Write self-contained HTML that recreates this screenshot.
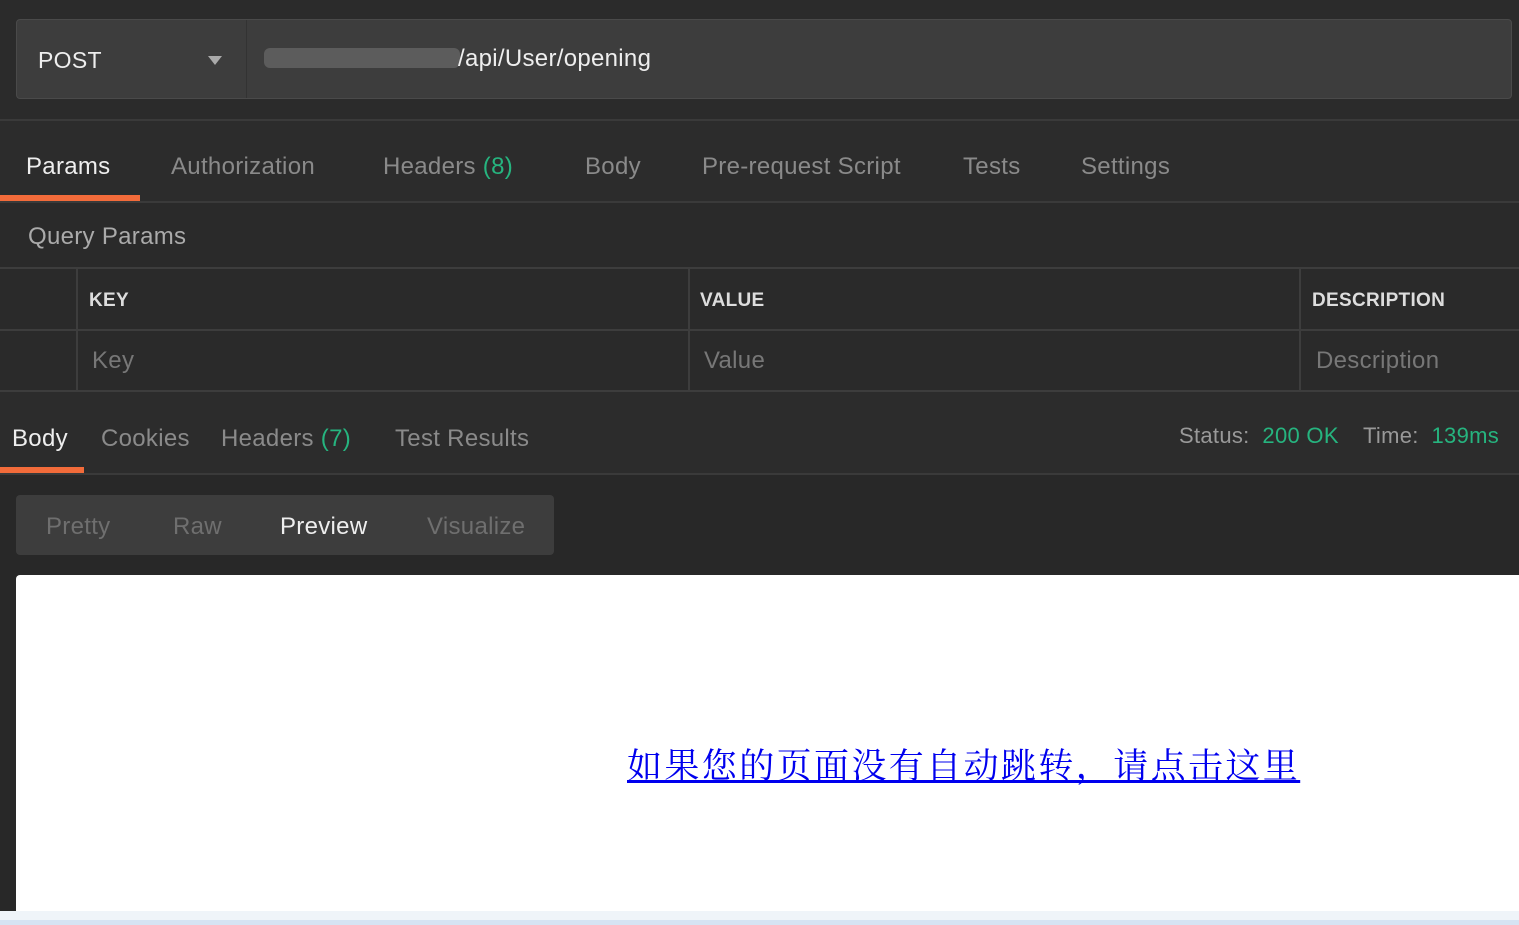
<!DOCTYPE html>
<html><head><meta charset="utf-8"><style>
*{margin:0;padding:0;box-sizing:border-box}
body{width:1519px;height:925px;background:#282828;font-family:"Liberation Sans","Noto Sans CJK SC",sans-serif;position:relative;overflow:hidden;color:#8a8a8a}
.a{position:absolute}
.t{position:absolute;font-size:24px;white-space:nowrap;letter-spacing:.3px}
.g{color:#26b47f}
</style></head><body>
<div class="a" style="left:0;top:0;width:1519px;height:120px;background:#2b2b2b"></div>
<div class="a" style="left:16px;top:19px;width:1496px;height:80px;background:#3d3d3d;border:1px solid #4a4a4a;border-radius:4px"></div>
<div class="a" style="left:246px;top:20px;width:1px;height:78px;background:#333"></div>
<div class="t" style="left:38px;top:47px;color:#eee;font-size:23px">POST</div>
<div class="a" style="left:208px;top:56px;width:0;height:0;border-left:7px solid transparent;border-right:7px solid transparent;border-top:9px solid #aaa"></div>
<div class="a" style="left:264px;top:48px;width:196px;height:20px;background:#777;opacity:.55;border-radius:6px"></div>
<div class="t" style="left:458px;top:45px;color:#eee">/api/User/opening</div>
<div class="a" style="left:0;top:119px;width:1519px;height:2px;background:#3a3a3a"></div>
<div class="a" style="left:0;top:121px;width:1519px;height:81px;background:#2c2c2c"></div>
<div class="t" style="left:26px;top:153px;color:#eee">Params</div>
<div class="t" style="left:171px;top:153px">Authorization</div>
<div class="t" style="left:383px;top:153px">Headers <span class="g">(8)</span></div>
<div class="t" style="left:585px;top:153px">Body</div>
<div class="t" style="left:702px;top:153px">Pre-request Script</div>
<div class="t" style="left:963px;top:153px">Tests</div>
<div class="t" style="left:1081px;top:153px">Settings</div>
<div class="a" style="left:0;top:195px;width:140px;height:6px;background:#f26b3a"></div>
<div class="a" style="left:0;top:201px;width:1519px;height:2px;background:#3a3a3a"></div>
<div class="a" style="left:0;top:203px;width:1519px;height:189px;background:#2a2a2a"></div>
<div class="t" style="left:28px;top:223px;color:#aaa">Query Params</div>
<div class="a" style="left:0;top:267px;width:1519px;height:2px;background:#3d3d3d"></div>
<div class="a" style="left:0;top:329px;width:1519px;height:2px;background:#3d3d3d"></div>
<div class="a" style="left:0;top:390px;width:1519px;height:2px;background:#3d3d3d"></div>
<div class="a" style="left:76px;top:268px;width:2px;height:123px;background:#3d3d3d"></div>
<div class="a" style="left:688px;top:268px;width:2px;height:123px;background:#3d3d3d"></div>
<div class="a" style="left:1299px;top:268px;width:2px;height:123px;background:#3d3d3d"></div>
<div class="t" style="left:89px;top:290px;color:#ddd;font-size:19px;font-weight:bold">KEY</div>
<div class="t" style="left:700px;top:290px;color:#ddd;font-size:19px;font-weight:bold">VALUE</div>
<div class="t" style="left:1312px;top:290px;color:#ddd;font-size:19px;font-weight:bold">DESCRIPTION</div>
<div class="t" style="left:92px;top:347px;color:#777">Key</div>
<div class="t" style="left:704px;top:347px;color:#777">Value</div>
<div class="t" style="left:1316px;top:347px;color:#777">Description</div>
<div class="a" style="left:0;top:392px;width:1519px;height:81px;background:#2c2c2c"></div>
<div class="t" style="left:12px;top:425px;color:#eee">Body</div>
<div class="t" style="left:101px;top:425px">Cookies</div>
<div class="t" style="left:221px;top:425px">Headers <span class="g">(7)</span></div>
<div class="t" style="left:395px;top:425px">Test Results</div>
<div class="t" style="left:1179px;top:423px;font-size:22px;color:#999">Status:&nbsp; <span class="g">200 OK</span></div>
<div class="t" style="left:1363px;top:423px;font-size:22px;color:#999">Time:&nbsp; <span class="g">139ms</span></div>
<div class="a" style="left:0;top:467px;width:84px;height:6px;background:#f26b3a"></div>
<div class="a" style="left:0;top:473px;width:1519px;height:2px;background:#3a3a3a"></div>
<div class="a" style="left:16px;top:495px;width:538px;height:60px;background:#3d3d3d;border-radius:4px"></div>
<div class="t" style="left:46px;top:513px;color:#6f6f6f">Pretty</div>
<div class="t" style="left:173px;top:513px;color:#6f6f6f">Raw</div>
<div class="t" style="left:280px;top:513px;color:#eee">Preview</div>
<div class="t" style="left:427px;top:513px;color:#6f6f6f">Visualize</div>
<div class="a" style="left:16px;top:575px;width:1503px;height:336px;background:#fff;border-radius:4px 0 0 0"></div>
<div class="t" style="left:627px;top:739px;font-family:'Noto Serif CJK SC',serif;font-size:35px;color:#0000ee;text-decoration:underline;letter-spacing:2.4px">如果您的页面没有自动跳转，请点击这里</div>
<div class="a" style="left:0;top:911px;width:1519px;height:9px;background:#eff4f9"></div>
<div class="a" style="left:0;top:920px;width:1519px;height:5px;background:#d6e3f3"></div>
</body></html>
